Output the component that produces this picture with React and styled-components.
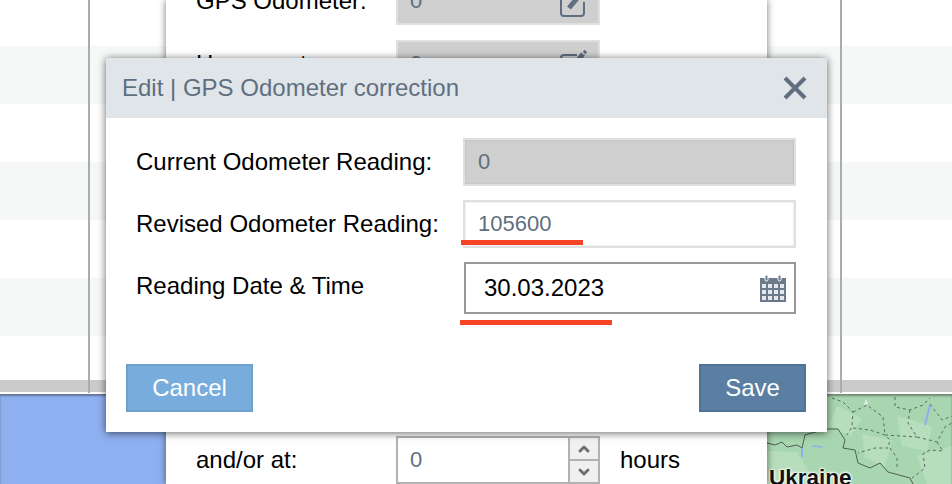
import styled, { createGlobalStyle } from "styled-components";
import { ChevronUp, ChevronDown } from "lucide-react";

const GlobalStyle = createGlobalStyle`
  html, body {
    margin: 0;
    background: #fff;
  }
  * {
    box-sizing: border-box;
  }
`;

const Page = styled.div`
  position: relative;
  width: 952px;
  height: 484px;
  overflow: hidden;
  font-family: "Liberation Sans", Arial, sans-serif;
  font-size: 24px;
  color: #000;
`;

const Table = styled.div`
  height: 380px;
  overflow: hidden;
`;

const TableRows = styled.div`
  margin-top: -12px;
`;

const TableRow = styled.div`
  height: 58px;
  background: ${(p) => (p.$striped ? "#f5f8f7" : "#fff")};
`;

const ScrollBar = styled.div`
  height: 12px;
  background: #cbcbcb;
`;

const MapArea = styled.div`
  position: relative;
  display: flex;
  margin-top: 2px;
  height: 90px;
  &::after {
    content: "";
    position: absolute;
    inset: 0;
    box-shadow: inset 0 2px 2px rgba(60, 60, 60, 0.5);
  }
`;

const Sea = styled.div`
  flex: 1;
  background: #8fb0f0;
`;

const Land = styled.div`
  position: relative;
  width: 185px;
  background: #a8d6b0;
  overflow: hidden;
`;

const MapDrawing = styled.svg`
  display: block;
  width: 185px;
  height: 90px;
`;

const CountryName = styled.span`
  position: absolute;
  left: 2px;
  top: 71px;
  font-weight: 700;
  font-size: 22.5px;
  line-height: 26px;
  color: #111;
  text-shadow: 0 0 3px #fff, 0 0 3px #fff, 0 0 2px #fff, 0 0 2px #fff;
`;

const Window = styled.div`
  position: absolute;
  left: 88px;
  top: 0;
  width: 754px;
  height: 393px;
  border-left: 2px solid #a9adb0;
  border-right: 2px solid #a9adb0;
`;

const Panel = styled.div`
  position: absolute;
  left: 166px;
  top: 0;
  width: 601px;
  height: 484px;
  padding-left: 31px;
  background: #fff;
  box-shadow: 0 0 7px rgba(0, 0, 0, 0.55);
  display: flex;
  flex-direction: column;
  justify-content: space-between;
`;

const PanelTop = styled.div`
  margin-top: -23px;
  display: flex;
  flex-direction: column;
  gap: 15px;
`;

const PanelRow = styled.div`
  display: flex;
  align-items: center;
  height: 48px;
`;

const PanelLabel = styled.div`
  width: 199px;
  flex: none;
  margin-left: -1px;
  padding-right: 0;
`;

const LockedInput = styled.div`
  width: 204px;
  height: 48px;
  margin-left: 1px;
  display: flex;
  align-items: center;
  justify-content: space-between;
  padding: 0 9px 0 12px;
  background: #cfcfcf;
  border: 2px solid #e0e0e0;
  color: #5f6f7f;
  font-size: 22px;
`;

const EditIcon = styled.svg`
  display: block;
  width: 30px;
  height: 32px;
  fill: none;
  stroke: #5f6f7f;
`;

const Spinner = styled.div`
  width: 204px;
  height: 48px;
  margin-left: 1px;
  display: flex;
  border: 2px solid #b2b2b2;
  color: #5f6f7f;
  font-size: 22px;
`;

const SpinnerValue = styled.div`
  flex: 1;
  display: flex;
  align-items: center;
  padding-left: 12px;
`;

const SpinnerButtons = styled.div`
  width: 30px;
  display: flex;
  flex-direction: column;
  border-left: 2px solid #b2b2b2;
`;

const SpinnerButton = styled.div`
  flex: 1;
  display: flex;
  align-items: center;
  justify-content: center;
  background: #f0f0f0;
  color: #707070;
  & + & {
    border-top: 2px solid #b2b2b2;
  }
`;

const Unit = styled.div`
  margin-left: 20px;
`;

const Modal = styled.div`
  position: absolute;
  left: 106px;
  top: 58px;
  width: 721px;
  height: 374px;
  background: #fff;
  box-shadow: 0 1px 8px rgba(0, 0, 0, 0.6);
`;

const ModalHeader = styled.div`
  height: 60px;
  display: flex;
  align-items: center;
  justify-content: space-between;
  padding: 0 20px 0 16px;
  background: #e0e5e9;
  color: #5f6f7f;
`;

const CloseIcon = styled.svg`
  display: block;
  width: 24px;
  height: 24px;
  stroke: #5f6f7f;
  stroke-width: 4;
  fill: none;
`;

const ModalBody = styled.div`
  padding: 20px 31px 0 30px;
  display: flex;
  flex-direction: column;
  gap: 14px;
`;

const FormRow = styled.div`
  display: grid;
  grid-template-columns: 327px 333px;
  align-items: center;
`;

const FormLabel = styled.div`
  padding-bottom: ${(p) => p.$lift || 0}px;
`;

const Field = styled.div`
  position: relative;
  height: 48px;
  display: flex;
  align-items: center;
  padding-left: 13px;
  font-size: 22px;
  color: #5f6f7f;
  border: 2px solid #e0e0e0;
  background: ${(p) => (p.$disabled ? "#cfcfcf" : "#fff")};
  box-shadow: inset 0 0 2px ${(p) => (p.$disabled ? "#b4b4b4" : "#cfcfcf")};
`;

const DateField = styled.div`
  position: relative;
  height: 52px;
  margin-left: 1px;
  display: flex;
  align-items: center;
  justify-content: space-between;
  padding: 0 8px 0 18px;
  border: 2px solid #999;
  background: #fff;
`;

const CalendarIcon = styled.svg`
  display: block;
  width: 26px;
  height: 27px;
`;

const Underline = styled.div`
  position: absolute;
  height: 5px;
  left: ${(p) => p.$left}px;
  top: ${(p) => p.$top}px;
  width: ${(p) => p.$width}px;
  background: #f44325;
`;

const ModalFooter = styled.div`
  display: flex;
  justify-content: space-between;
  padding: 50px 21px 0 20px;
`;

const Button = styled.div`
  height: 48px;
  width: ${(p) => p.$width}px;
  display: flex;
  align-items: center;
  justify-content: center;
  color: #fff;
  background: ${(p) => (p.$primary ? "#5a7fa3" : "#78acdc")};
  border: 2px solid ${(p) => (p.$primary ? "#4f7396" : "#6fa0cb")};
`;

// map lines, in the land's own coordinates
const solidBorders = [
  "M59 35 L71 35 L78 46 L76 54 L88 56 L91 69 L103 74 L113 69 L121 78 L143 84 L146 90",
  "M0 49 L8 51 L15 48 L20 53 L30 51 L35 54 L38 41 L59 35",
];

const dashedBorders = [
  "M65 4 L76 8 L86 18 L85 33 L80 41",
  "M86 34 L103 36 L118 41 L123 46 L121 54 L108 54 L91 59",
  "M86 18 L100 11 L116 23 L118 41",
  "M128 3 L128 13 L143 16 L156 11 L163 4",
  "M143 16 L141 29 L150 43 L170 48 L178 33 L185 29",
  "M118 41 L150 43",
  "M123 54 L130 64 L130 76",
  "M170 48 L176 57 L163 56 L156 60 L158 74 L145 84",
  "M163 10 L175 26 L185 22",
];

const lightPatches = [
  "M70 12 L95 24 L84 42 L62 32 Z",
  "M95 40 L125 46 L118 72 L98 64 Z",
  "M130 22 L165 32 L160 57 L135 52 Z",
  "M0 57 L30 58 L50 90 L0 90 Z",
  "M150 62 L185 52 L185 90 L160 90 Z",
];

const PencilSquare = () => (
  <EditIcon viewBox="0 0 30 32">
    <path strokeWidth="2" d="M18 7 H5 a3 3 0 0 0 -3 3 V28 a3 3 0 0 0 3 3 H22 a3 3 0 0 0 3 -3 V17" />
    <path strokeWidth="5" d="M10 23 L24 6" />
    <path strokeWidth="3.5" d="M25 5 L27 3" />
  </EditIcon>
);

export default function App() {
  return (
    <Page>
      <GlobalStyle />
      <Table>
        <TableRows>
          {[false, true, false, true, false, true, false].map((striped, i) => (
            <TableRow key={i} $striped={striped} />
          ))}
        </TableRows>
      </Table>
      <ScrollBar />
      <MapArea>
        <Sea />
        <Land>
          <MapDrawing viewBox="0 0 185 90">
            {lightPatches.map((d) => (
              <path key={d} d={d} fill="#b6dEbc" />
            ))}
            <path d="M99 5 L101 10 L97 11 Z" fill="#e4f0e6" />
            <path d="M163 11 L158 31" stroke="#8fb0f0" strokeWidth="2" fill="none" />
            <path d="M35 54 L35 63" stroke="#8fb0f0" strokeWidth="2" fill="none" />
            <path d="M45 52 L56 53" stroke="#8fb0f0" strokeWidth="1.5" fill="none" />
            {solidBorders.map((d) => (
              <path key={d} d={d} stroke="#4f5f55" strokeWidth="1" fill="none" />
            ))}
            {dashedBorders.map((d) => (
              <path key={d} d={d} stroke="#5a6a60" strokeWidth="1" strokeDasharray="3 3" fill="none" />
            ))}
          </MapDrawing>
          <CountryName>Ukraine</CountryName>
        </Land>
      </MapArea>

      <Window />

      <Panel>
        <PanelTop>
          <PanelRow>
            <PanelLabel>GPS Odometer:</PanelLabel>
            <LockedInput>
              0
              <PencilSquare />
            </LockedInput>
          </PanelRow>
          <PanelRow>
            <PanelLabel>Hours meter:</PanelLabel>
            <LockedInput>
              0
              <PencilSquare />
            </LockedInput>
          </PanelRow>
        </PanelTop>
        <PanelRow>
          <PanelLabel>and/or at:</PanelLabel>
          <Spinner>
            <SpinnerValue>0</SpinnerValue>
            <SpinnerButtons>
              <SpinnerButton>
                <ChevronUp size={16} strokeWidth={4.5} />
              </SpinnerButton>
              <SpinnerButton>
                <ChevronDown size={16} strokeWidth={4.5} />
              </SpinnerButton>
            </SpinnerButtons>
          </Spinner>
          <Unit>hours</Unit>
        </PanelRow>
      </Panel>

      <Modal>
        <ModalHeader>
          Edit | GPS Odometer correction
          <CloseIcon viewBox="0 0 24 24">
            <path d="M2 2 L22 22 M22 2 L2 22" />
          </CloseIcon>
        </ModalHeader>
        <ModalBody>
          <FormRow>
            <FormLabel>Current Odometer Reading:</FormLabel>
            <Field $disabled>0</Field>
          </FormRow>
          <FormRow>
            <FormLabel>Revised Odometer Reading:</FormLabel>
            <Field>
              105600
              <Underline $left={-4} $top={38} $width={122} />
            </Field>
          </FormRow>
          <FormRow>
            <FormLabel $lift={4}>Reading Date &amp; Time</FormLabel>
            <DateField>
              30.03.2023
              <CalendarIcon viewBox="0 0 26 27">
                <rect x="0" y="3" width="26" height="24" fill="#6b7b8c" />
                <rect x="5" y="0" width="3" height="6" rx="1.5" fill="#6b7b8c" stroke="#fff" strokeWidth="1" />
                <rect x="18" y="0" width="3" height="6" rx="1.5" fill="#6b7b8c" stroke="#fff" strokeWidth="1" />
                {[9, 15, 21].map((y) =>
                  [2, 8, 14, 20].map((x) => (
                    <rect key={`${x}-${y}`} x={x} y={y} width="4" height="4" fill="#e4e8ec" />
                  ))
                )}
              </CalendarIcon>
              <Underline $left={-6} $top={56} $width={152} />
            </DateField>
          </FormRow>
        </ModalBody>
        <ModalFooter>
          <Button $width={127}>Cancel</Button>
          <Button $width={107} $primary>
            Save
          </Button>
        </ModalFooter>
      </Modal>
    </Page>
  );
}
